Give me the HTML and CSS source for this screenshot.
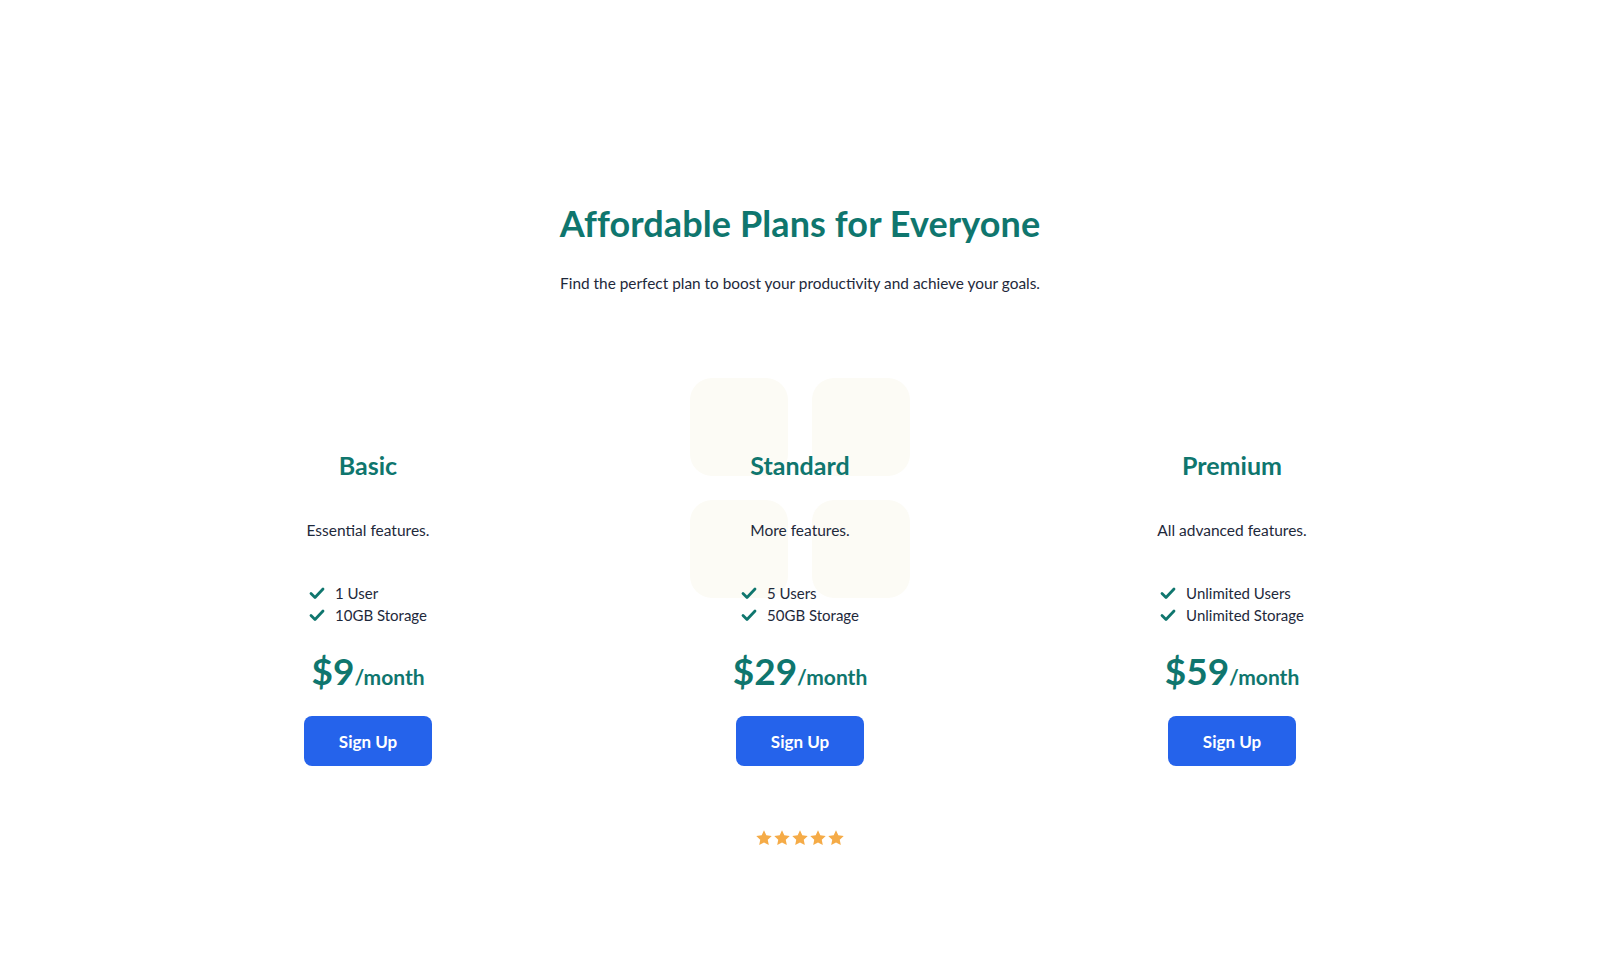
FILE: index.html
```html
<!DOCTYPE html>
<html lang="en">
<head>
<meta charset="utf-8">
<title>Pricing</title>
<link rel="stylesheet" href="styles.css">
</head>
<body>
<main class="pricing">
  <h1 class="title">Affordable Plans for Everyone</h1>
  <p class="subtitle">Find the perfect plan to boost your productivity and achieve your goals.</p>

  <div class="plans">
    <div class="deco" aria-hidden="true">
      <span></span><span></span><span></span><span></span>
    </div>

    <div class="plan">
      <h2 class="plan-name">Basic</h2>
      <p class="plan-desc">Essential features.</p>
      <ul class="features">
        <li><svg class="check" viewBox="0 0 16 16"><path d="M2 8.5l4 4 8-8.5"/></svg>1 User</li>
        <li><svg class="check" viewBox="0 0 16 16"><path d="M2 8.5l4 4 8-8.5"/></svg>10GB Storage</li>
      </ul>
      <div class="price"><span class="amount">$9</span><span class="per">/month</span></div>
      <button class="btn">Sign Up</button>
    </div>

    <div class="plan">
      <h2 class="plan-name">Standard</h2>
      <p class="plan-desc">More features.</p>
      <ul class="features">
        <li><svg class="check" viewBox="0 0 16 16"><path d="M2 8.5l4 4 8-8.5"/></svg>5 Users</li>
        <li><svg class="check" viewBox="0 0 16 16"><path d="M2 8.5l4 4 8-8.5"/></svg>50GB Storage</li>
      </ul>
      <div class="price"><span class="amount">$29</span><span class="per">/month</span></div>
      <button class="btn">Sign Up</button>
    </div>

    <div class="plan">
      <h2 class="plan-name">Premium</h2>
      <p class="plan-desc">All advanced features.</p>
      <ul class="features">
        <li><svg class="check" viewBox="0 0 16 16"><path d="M2 8.5l4 4 8-8.5"/></svg>Unlimited Users</li>
        <li><svg class="check" viewBox="0 0 16 16"><path d="M2 8.5l4 4 8-8.5"/></svg>Unlimited Storage</li>
      </ul>
      <div class="price"><span class="amount">$59</span><span class="per">/month</span></div>
      <button class="btn">Sign Up</button>
    </div>
  </div>

  <div class="stars" aria-label="5 stars">
    <svg viewBox="0 0 24 24"><path d="M12 1.8l3.1 6.6 7.2.9-5.3 5 1.4 7.1L12 17.9l-6.4 3.5 1.4-7.1-5.3-5 7.2-.9z"/></svg>
    <svg viewBox="0 0 24 24"><path d="M12 1.8l3.1 6.6 7.2.9-5.3 5 1.4 7.1L12 17.9l-6.4 3.5 1.4-7.1-5.3-5 7.2-.9z"/></svg>
    <svg viewBox="0 0 24 24"><path d="M12 1.8l3.1 6.6 7.2.9-5.3 5 1.4 7.1L12 17.9l-6.4 3.5 1.4-7.1-5.3-5 7.2-.9z"/></svg>
    <svg viewBox="0 0 24 24"><path d="M12 1.8l3.1 6.6 7.2.9-5.3 5 1.4 7.1L12 17.9l-6.4 3.5 1.4-7.1-5.3-5 7.2-.9z"/></svg>
    <svg viewBox="0 0 24 24"><path d="M12 1.8l3.1 6.6 7.2.9-5.3 5 1.4 7.1L12 17.9l-6.4 3.5 1.4-7.1-5.3-5 7.2-.9z"/></svg>
  </div>
</main>
</body>
</html>
```

FILE: styles.css
```css
* { box-sizing: border-box; }

html, body {
  margin: 0;
  padding: 0;
  background: #ffffff;
}

body {
  font-family: "Lato", "Inter", "Noto Sans", sans-serif;
  color: #1e293b;
}

.pricing {
  display: flex;
  flex-direction: column;
  align-items: center;
  padding-top: 203px;
}

.title {
  margin: 0;
  font-size: 36px;
  line-height: 40px;
  font-weight: 700;
  color: #0f766e;
  letter-spacing: 0.1px;
}

.subtitle {
  margin: 28px 0 0;
  font-size: 15.4px;
  line-height: 24px;
  color: #1e293b;
}

.plans {
  position: relative;
  margin-top: 154px;
  width: 1296px;
  display: grid;
  grid-template-columns: repeat(3, 1fr);
}

.deco {
  position: absolute;
  left: 50%;
  top: -71px;
  transform: translateX(-50%);
  display: grid;
  grid-template-columns: 98px 98px;
  grid-auto-rows: 98px;
  gap: 24px;
  z-index: 0;
}

.deco span {
  background: #fcfbf5;
  border-radius: 22px;
}

.plan {
  position: relative;
  z-index: 1;
  display: flex;
  flex-direction: column;
  align-items: center;
}

.plan-name {
  margin: 0;
  font-size: 25px;
  line-height: 32px;
  font-weight: 700;
  color: #0f766e;
}

.plan-desc {
  margin: 37px 0 0;
  font-size: 15.5px;
  line-height: 24px;
}

.features {
  list-style: none;
  margin: 40px 0 0;
  padding: 0;
}

.features li {
  display: flex;
  align-items: center;
  gap: 10px;
  font-size: 15px;
  line-height: 22px;
}

.check {
  width: 16px;
  height: 16px;
  fill: none;
  stroke: #0f766e;
  stroke-width: 2.8;
  stroke-linecap: round;
  stroke-linejoin: round;
}

.price {
  margin-top: 25px;
  display: flex;
  align-items: baseline;
  color: #0f766e;
  font-weight: 700;
  line-height: 40px;
}

.amount {
  font-size: 37px;
}

.per {
  font-size: 21px;
}

.btn {
  margin-top: 19px;
  width: 128px;
  height: 50px;
  border: none;
  border-radius: 8px;
  background: #2563eb;
  color: #ffffff;
  font-family: inherit;
  font-size: 17px;
  font-weight: 700;
  cursor: pointer;
}

.stars {
  margin-top: 63px;
  display: flex;
  gap: 0;
}

.stars svg {
  width: 18px;
  height: 18px;
  fill: #f5ab47;
}
```
